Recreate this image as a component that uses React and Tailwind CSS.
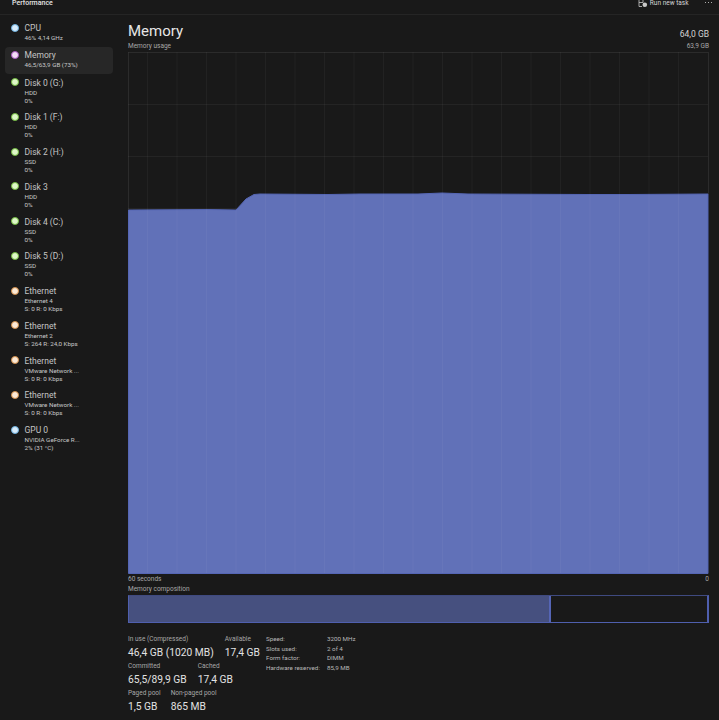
import React from 'react';

const sidebarItems = [
  { name: 'CPU', lines: ['46% 4,14 GHz'], dot: 'bg-[#d8ecfb]', ring: 'border-[#6aaede]' },
  { name: 'Memory', lines: ['46,5/63,9 GB (73%)'], dot: 'bg-[#f3dcf7]', ring: 'border-[#a654bd]', active: true },
  { name: 'Disk 0 (G:)', lines: ['HDD', '0%'], dot: 'bg-[#def7c8]', ring: 'border-[#6fb83c]' },
  { name: 'Disk 1 (F:)', lines: ['HDD', '0%'], dot: 'bg-[#def7c8]', ring: 'border-[#6fb83c]' },
  { name: 'Disk 2 (H:)', lines: ['SSD', '0%'], dot: 'bg-[#def7c8]', ring: 'border-[#6fb83c]' },
  { name: 'Disk 3', lines: ['HDD', '0%'], dot: 'bg-[#def7c8]', ring: 'border-[#6fb83c]' },
  { name: 'Disk 4 (C:)', lines: ['SSD', '0%'], dot: 'bg-[#def7c8]', ring: 'border-[#6fb83c]' },
  { name: 'Disk 5 (D:)', lines: ['SSD', '0%'], dot: 'bg-[#def7c8]', ring: 'border-[#6fb83c]' },
  { name: 'Ethernet', lines: ['Ethernet 4', 'S: 0 R: 0 Kbps'], dot: 'bg-[#fbe9d6]', ring: 'border-[#d08a45]' },
  { name: 'Ethernet', lines: ['Ethernet 2', 'S: 264 R: 24,0 Kbps'], dot: 'bg-[#fbe9d6]', ring: 'border-[#d08a45]' },
  { name: 'Ethernet', lines: ['VMware Network ...', 'S: 0 R: 0 Kbps'], dot: 'bg-[#fbe9d6]', ring: 'border-[#d08a45]' },
  { name: 'Ethernet', lines: ['VMware Network ...', 'S: 0 R: 0 Kbps'], dot: 'bg-[#fbe9d6]', ring: 'border-[#d08a45]' },
  { name: 'GPU 0', lines: ['NVIDIA GeForce R...', '2% (31 °C)'], dot: 'bg-[#d8ecfb]', ring: 'border-[#6aaede]' },
];

const vLines = Array.from({ length: 19 }, (_, i) => 19.5 + i * 29.5);
const hLines = [52, 104, 156, 208, 260, 312, 364, 416, 468];
const curve = '0.5,158 80,157.5 108,158 118,147 126,142.5 132,142 200,142.5 232,142 290,142 314,141 340,142 460,142.5 500,142.5 580,142';

function SidebarItem({ item }) {
  const tall = item.lines.length > 1;
  return (
    <div className={`flex w-[108px] pl-[5.5px] rounded-sm ${tall ? 'h-[34.75px] pt-[2.5px]' : 'h-[27px] pt-[2px]'} ${item.active ? 'bg-[#272727]' : ''}`}>
      <div className={`mt-[1.5px] w-[8px] h-[8px] rounded-full border ${item.dot} ${item.ring} shrink-0`} />
      <div className="ml-[6px] min-w-0">
        <div className="text-[8.5px] leading-[12px] text-[#c4c4c4] whitespace-nowrap">{item.name}</div>
        {item.lines.map((line, i) => (
          <div key={i} className="text-[6.25px] leading-[8px] text-[#c8c8c8] whitespace-nowrap">{line}</div>
        ))}
      </div>
    </div>
  );
}

function Stat({ label, value }) {
  return (
    <div>
      <div className="text-[6.5px] leading-[9px] text-[#a8a8a8] whitespace-nowrap">{label}</div>
      <div className="mt-[1.5px] text-[10.25px] leading-[13px] text-[#e2e2e2] whitespace-nowrap">{value}</div>
    </div>
  );
}

function MemoryChart() {
  return (
    <svg width="581" height="522" viewBox="0 0 581 522" className="block">
      {hLines.map((y) => (
        <line key={y} x1="0" x2="580" y1={y + 0.5} y2={y + 0.5} stroke="#ffffff" strokeOpacity="0.05" />
      ))}
      <polygon fill="#6171b8" points={`${curve} 580,521.5 0.5,521.5`} />
      <polyline fill="none" stroke="#5566b4" strokeWidth="1" points={`0.5,521.5 ${curve} 580,521.5 0.5,521.5`} />
      {vLines.map((x) => (
        <line key={x} x1={x} x2={x} y1="0" y2="521" stroke="#ffffff" strokeOpacity="0.04" />
      ))}
      <line x1="0.5" x2="580" y1="0.5" y2="0.5" stroke="#ffffff" strokeOpacity="0.08" />
      <line x1="0.5" x2="0.5" y1="0" y2="158" stroke="#ffffff" strokeOpacity="0.08" />
      <line x1="580.5" x2="580.5" y1="0" y2="142" stroke="#ffffff" strokeOpacity="0.08" />
    </svg>
  );
}

export default function App() {
  return (
    <div className="w-[719px] h-[720px] overflow-hidden bg-[#191919] font-['Roboto','Open_Sans',sans-serif] flex flex-col">
      {/* Title bar */}
      <div className="h-[15px] shrink-0 flex items-start border-b border-[#252525] pl-[12px]">
        <div className="text-[7px] leading-[7px] font-medium text-[#e4e4e4]">Performance</div>
        <div className="ml-auto flex items-start">
          <svg width="10" height="8" viewBox="0 0 10 8" className="text-[#c8c8c8]">
            <path d="M1 0V6.5H4M1 2.5H5M5 0V2.5" fill="none" stroke="currentColor" strokeWidth="0.8" />
            <circle cx="6.8" cy="4.8" r="2.3" fill="currentColor" />
          </svg>
          <div className="ml-[2px] text-[6.5px] leading-[6px] text-[#d4d4d4]">Run new task</div>
          <div className="ml-[16px] mr-[7px] flex gap-[1.5px] mt-[1.5px]">
            <span className="w-[1.5px] h-[1.5px] rounded-full bg-[#e0e0e0]" />
            <span className="w-[1.5px] h-[1.5px] rounded-full bg-[#e0e0e0]" />
            <span className="w-[1.5px] h-[1.5px] rounded-full bg-[#e0e0e0]" />
          </div>
        </div>
      </div>

      <div className="flex flex-1 min-h-0">
        {/* Sidebar */}
        <div className="w-[128px] shrink-0 pl-[5px] pt-[5px]">
          {sidebarItems.map((item, i) => (
            <SidebarItem key={i} item={item} />
          ))}
        </div>

        {/* Main panel */}
        <div className="flex-1 min-w-0 pr-[10px]">
          <div className="flex justify-between items-start h-[24px] pt-[7px]">
            <div className="text-[15px] leading-[18px] text-[#e6e6e6]">Memory</div>
            <div className="mt-[3px] text-[8.5px] leading-[18px] text-[#d4d4d4]">64,0 GB</div>
          </div>
          <div className="flex justify-between h-[10px] mt-[3px] text-[6.5px] leading-[9px] text-[#a8a8a8]">
            <span>Memory usage</span>
            <span>63,9 GB</span>
          </div>
          <MemoryChart />
          <div className="flex justify-between text-[6.5px] leading-[9px] text-[#a8a8a8] mt-[1px]">
            <span>60 seconds</span>
            <span>0</span>
          </div>
          <div className="text-[6.5px] leading-[9px] text-[#a8a8a8] mt-[1px]">Memory composition</div>
          <div className="flex h-[28px] w-[581px] mt-[1px] border border-[#4f5fae] border-t-[#3f4a80] border-r-2">
            <div className="w-[422px] bg-[#46507f] border-r-2 border-[#5565b5]" />
            <div className="flex-1" />
          </div>

          <div className="flex mt-[12px]">
            <div className="w-[138px] shrink-0">
              <div className="flex gap-[11px]">
                <Stat label="In use (Compressed)" value="46,4 GB (1020 MB)" />
                <Stat label="Available" value="17,4 GB" />
              </div>
              <div className="flex gap-[11px] mt-[3.5px]">
                <Stat label="Committed" value="65,5/89,9 GB" />
                <Stat label="Cached" value="17,4 GB" />
              </div>
              <div className="flex gap-[10px] mt-[3.5px]">
                <Stat label="Paged pool" value="1,5 GB" />
                <Stat label="Non-paged pool" value="865 MB" />
              </div>
            </div>
            <div className="grid grid-cols-[61px_auto] text-[6.25px] leading-[9.5px] text-[#b8b8b8] self-start">
              <span>Speed:</span><span>3200 MHz</span>
              <span>Slots used:</span><span>2 of 4</span>
              <span>Form factor:</span><span>DIMM</span>
              <span>Hardware reserved:</span><span>85,9 MB</span>
            </div>
          </div>
        </div>
      </div>
    </div>
  );
}
